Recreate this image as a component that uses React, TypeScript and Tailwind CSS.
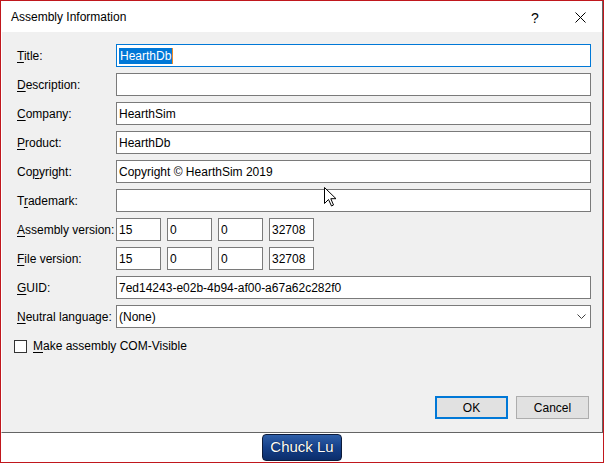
import React from "react";

const font = { fontFamily: '"Liberation Sans", Arial, sans-serif' };

function U({ children }: { children: React.ReactNode }) {
  return <span className="underline underline-offset-2 decoration-1">{children}</span>;
}

function Field({ value, focused, children }: { value?: string; focused?: boolean; children?: React.ReactNode }) {
  return (
    <div
      className={`flex-1 h-[23px] bg-white border flex items-center pl-[2px] text-[12px] text-black ${
        focused ? "border-[#0078d7]" : "border-[#7a7a7a]"
      }`}
    >
      {children ?? value}
    </div>
  );
}

function Small({ value }: { value: string }) {
  return (
    <div className="w-[45px] h-[23px] bg-white border border-[#7a7a7a] flex items-center pl-[2px] text-[12px] text-black">
      {value}
    </div>
  );
}

function Row({ label, children }: { label: React.ReactNode; children: React.ReactNode }) {
  return (
    <div className="flex items-center h-[23px]">
      <div className="w-[99px] shrink-0 text-[12px] text-black whitespace-nowrap">{label}</div>
      <div className="flex-1 flex gap-[6px]">{children}</div>
    </div>
  );
}

export default function App() {
  return (
    <div className="w-[604px] h-[463px] border border-[#c0171d] flex flex-col bg-white overflow-hidden" style={font}>
      <div className="h-[432px] shrink-0 border-r border-b border-[#646464] flex flex-col border-l border-l-white">
        <div className="h-[31px] shrink-0 bg-white flex items-center pl-[9px] relative">
          <span className="text-[12px] text-black">Assembly Information</span>
          <span className="absolute left-[529px] top-[7px] text-[14px] text-black">?</span>
          <svg className="absolute left-[573px] top-[11px]" width="11" height="11" viewBox="0 0 11 11">
            <path d="M0.5 0.5 L10.5 10.5 M10.5 0.5 L0.5 10.5" stroke="#000" strokeWidth="1" />
          </svg>
        </div>
        <div className="flex-1 bg-[#f0f0f0] flex flex-col pl-[15px] pr-[11px] pt-[12px] pb-[13px] relative">
          <div className="flex flex-col gap-[6px]">
            <Row label={<><U>T</U>itle:</>}>
              <Field focused>
                <span className="relative bg-[#0078d7] text-white leading-[16px] h-[16px] px-[1px]">HearthDb</span>
                <span className="w-[1px] h-[16px] bg-[#f08a24]" />
              </Field>
            </Row>
            <Row label={<><U>D</U>escription:</>}>
              <Field value="" />
            </Row>
            <Row label={<><U>C</U>ompany:</>}>
              <Field value="HearthSim" />
            </Row>
            <Row label={<><U>P</U>roduct:</>}>
              <Field value="HearthDb" />
            </Row>
            <Row label={<>Co<U>p</U>yright:</>}>
              <Field value="Copyright © HearthSim 2019" />
            </Row>
            <Row label={<>T<U>r</U>ademark:</>}>
              <Field value="" />
            </Row>
            <Row label={<><U>A</U>ssembly version:</>}>
              <Small value="15" />
              <Small value="0" />
              <Small value="0" />
              <Small value="32708" />
            </Row>
            <Row label={<><U>F</U>ile version:</>}>
              <Small value="15" />
              <Small value="0" />
              <Small value="0" />
              <Small value="32708" />
            </Row>
            <Row label={<><U>G</U>UID:</>}>
              <Field value="7ed14243-e02b-4b94-af00-a67a62c282f0" />
            </Row>
            <Row label={<><U>N</U>eutral language:</>}>
              <Field>
                <span className="flex-1">(None)</span>
                <svg width="9" height="5" viewBox="0 0 9 5" className="mr-[4px]">
                  <path d="M0.5 0.5 L4.5 4.5 L8.5 0.5" stroke="#404040" fill="none" strokeWidth="1" />
                </svg>
              </Field>
            </Row>
          </div>
          <div className="flex items-center mt-[9px] -ml-[3px]">
            <div className="w-[13px] h-[13px] bg-white border border-[#333333]" />
            <span className="ml-[6px] text-[12px] text-black">
              <U>M</U>ake assembly COM-Visible
            </span>
          </div>
          <div className="mt-auto flex justify-end gap-[8px] pr-[2px]">
            <div className="w-[73px] h-[23px] bg-[#e1e1e1] border-2 border-[#0078d7] flex items-center justify-center text-[12px] text-black">
              OK
            </div>
            <div className="w-[73px] h-[23px] bg-[#e1e1e1] border border-[#adadad] flex items-center justify-center text-[12px] text-black">
              Cancel
            </div>
          </div>
          <svg className="absolute left-[322px] top-[155px]" width="13" height="20" viewBox="0 0 13 20">
            <path d="M0.5 0.5 L0.5 16.5 L4.5 12.5 L7.5 19 L9.5 18 L6.8 11.7 L12 11.7 Z" fill="#fff" stroke="#000" strokeWidth="1" strokeLinejoin="miter" />
          </svg>
        </div>
      </div>
      <div className="flex-1 flex justify-center items-start pt-[1px]">
        <div
          className="w-[80px] h-[27px] rounded-[4px] border border-[#0d1b3a] flex items-center justify-center text-white text-[15px]"
          style={{ background: "linear-gradient(#2f5fa8, #15408a 50%, #0b2d6b)", textShadow: "0 0 1px #000" }}
        >
          Chuck Lu
        </div>
      </div>
    </div>
  );
}
